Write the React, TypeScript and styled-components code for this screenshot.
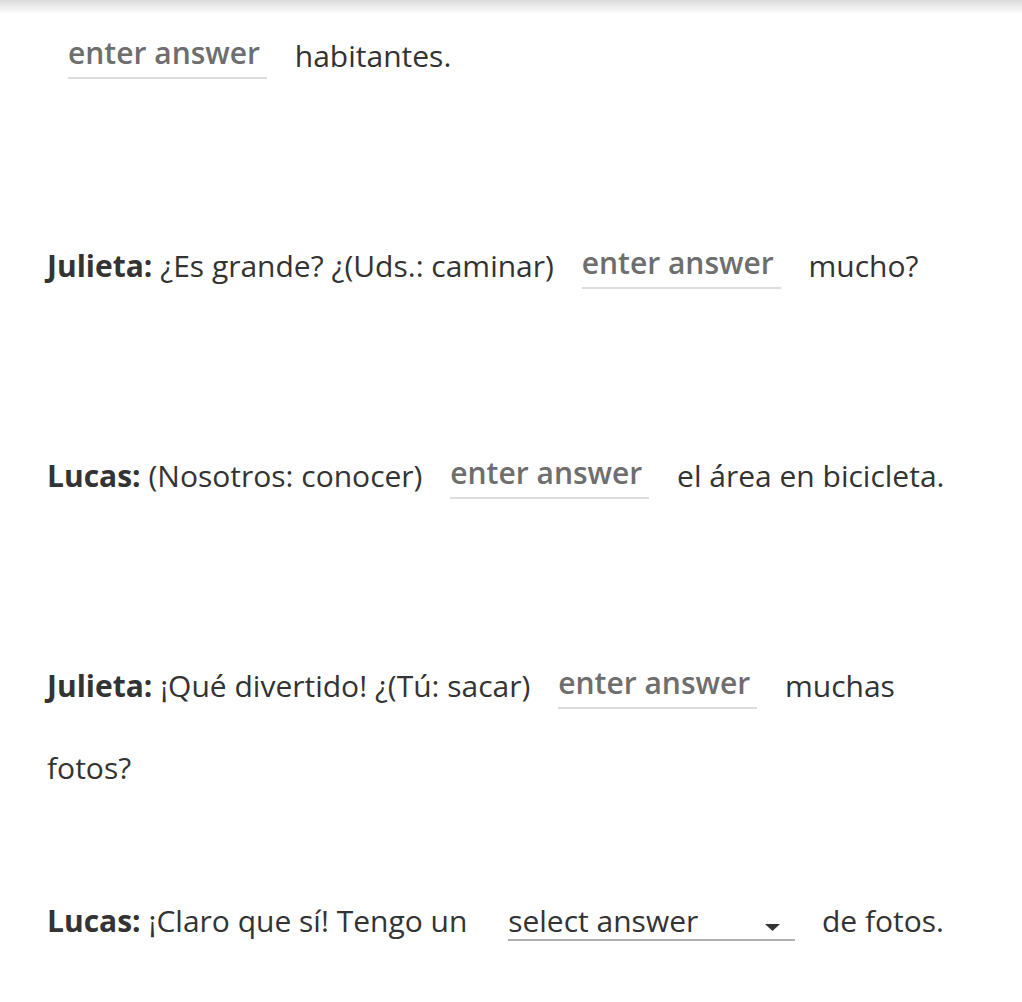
import styled, { createGlobalStyle } from "styled-components";

const GlobalStyle = createGlobalStyle`
  body {
    margin: 0;
    background: #ffffff;
    font-family: "Open Sans", "Noto Sans", sans-serif;
  }
`;

const Page = styled.div`
  width: 1022px;
  min-height: 1002px;
  background: #ffffff;
`;

// shadow left by the fixed header above the scrolled content
const HeaderShadow = styled.div`
  height: 14px;
  background: linear-gradient(#dadada, rgba(255, 255, 255, 0));
`;

const Dialogue = styled.div`
  display: flex;
  flex-direction: column;
  gap: 128px;
  padding: 1px 47px 0 47px;
`;

const Line = styled.p<{ pull?: number }>`
  margin: ${(p) => (p.pull ? `-${p.pull}px` : "0")} 0 0 0;
  font-size: 30px;
  line-height: 82px;
  color: #333333;
`;

const Speaker = styled.b`
  font-weight: 700;
`;

const AnswerInput = styled.input<{ lead?: boolean }>`
  width: 199px;
  margin: 0 20px 0 ${(p) => (p.lead ? "21px" : "20px")};
  padding: 0 0 3px 0;
  border: none;
  border-bottom: 2px solid #dddddd;
  outline: none;
  background: transparent;
  font-family: inherit;
  font-size: 30px;
  font-weight: 600;
  line-height: 1.36;
  color: #333333;
  vertical-align: 3px;

  &::placeholder {
    color: #6e6e6e;
    opacity: 1;
  }
`;

const SelectBox = styled.button`
  position: relative;
  display: inline-block;
  width: 287px;
  margin: 0 19px 0 33px;
  padding: 0;
  border: none;
  border-bottom: 2px solid #b0b0b0;
  background: transparent;
  font-family: inherit;
  font-size: 30px;
  font-weight: 400;
  line-height: 36px;
  color: #333333;
  text-align: left;
  cursor: pointer;
`;

const Caret = styled.svg`
  position: absolute;
  right: 15px;
  top: 21px;
`;

export default function App() {
  return (
    <Page>
      <GlobalStyle />
      <HeaderShadow />
      <Dialogue>
        <Line>
          <AnswerInput lead placeholder="enter answer" />
          {" "}habitantes.
        </Line>
        <Line>
          <Speaker>Julieta:</Speaker> ¿Es grande? ¿(Uds.: caminar){" "}
          <AnswerInput placeholder="enter answer" /> mucho?
        </Line>
        <Line>
          <Speaker>Lucas:</Speaker> (Nosotros: conocer){" "}
          <AnswerInput placeholder="enter answer" /> el área en bicicleta.
        </Line>
        <Line>
          <Speaker>Julieta:</Speaker> ¡Qué divertido! ¿(Tú: sacar){" "}
          <AnswerInput placeholder="enter answer" /> muchas fotos?
        </Line>
        <Line pull={57}>
          <Speaker>Lucas:</Speaker> ¡Claro que sí! Tengo un{" "}
          <SelectBox type="button">
            select answer
            <Caret width="15" height="7" viewBox="0 0 15 7">
              <path d="M0 0 L15 0 L7.5 7 Z" fill="#333333" />
            </Caret>
          </SelectBox>{" "}
          de fotos.
        </Line>
      </Dialogue>
    </Page>
  );
}
